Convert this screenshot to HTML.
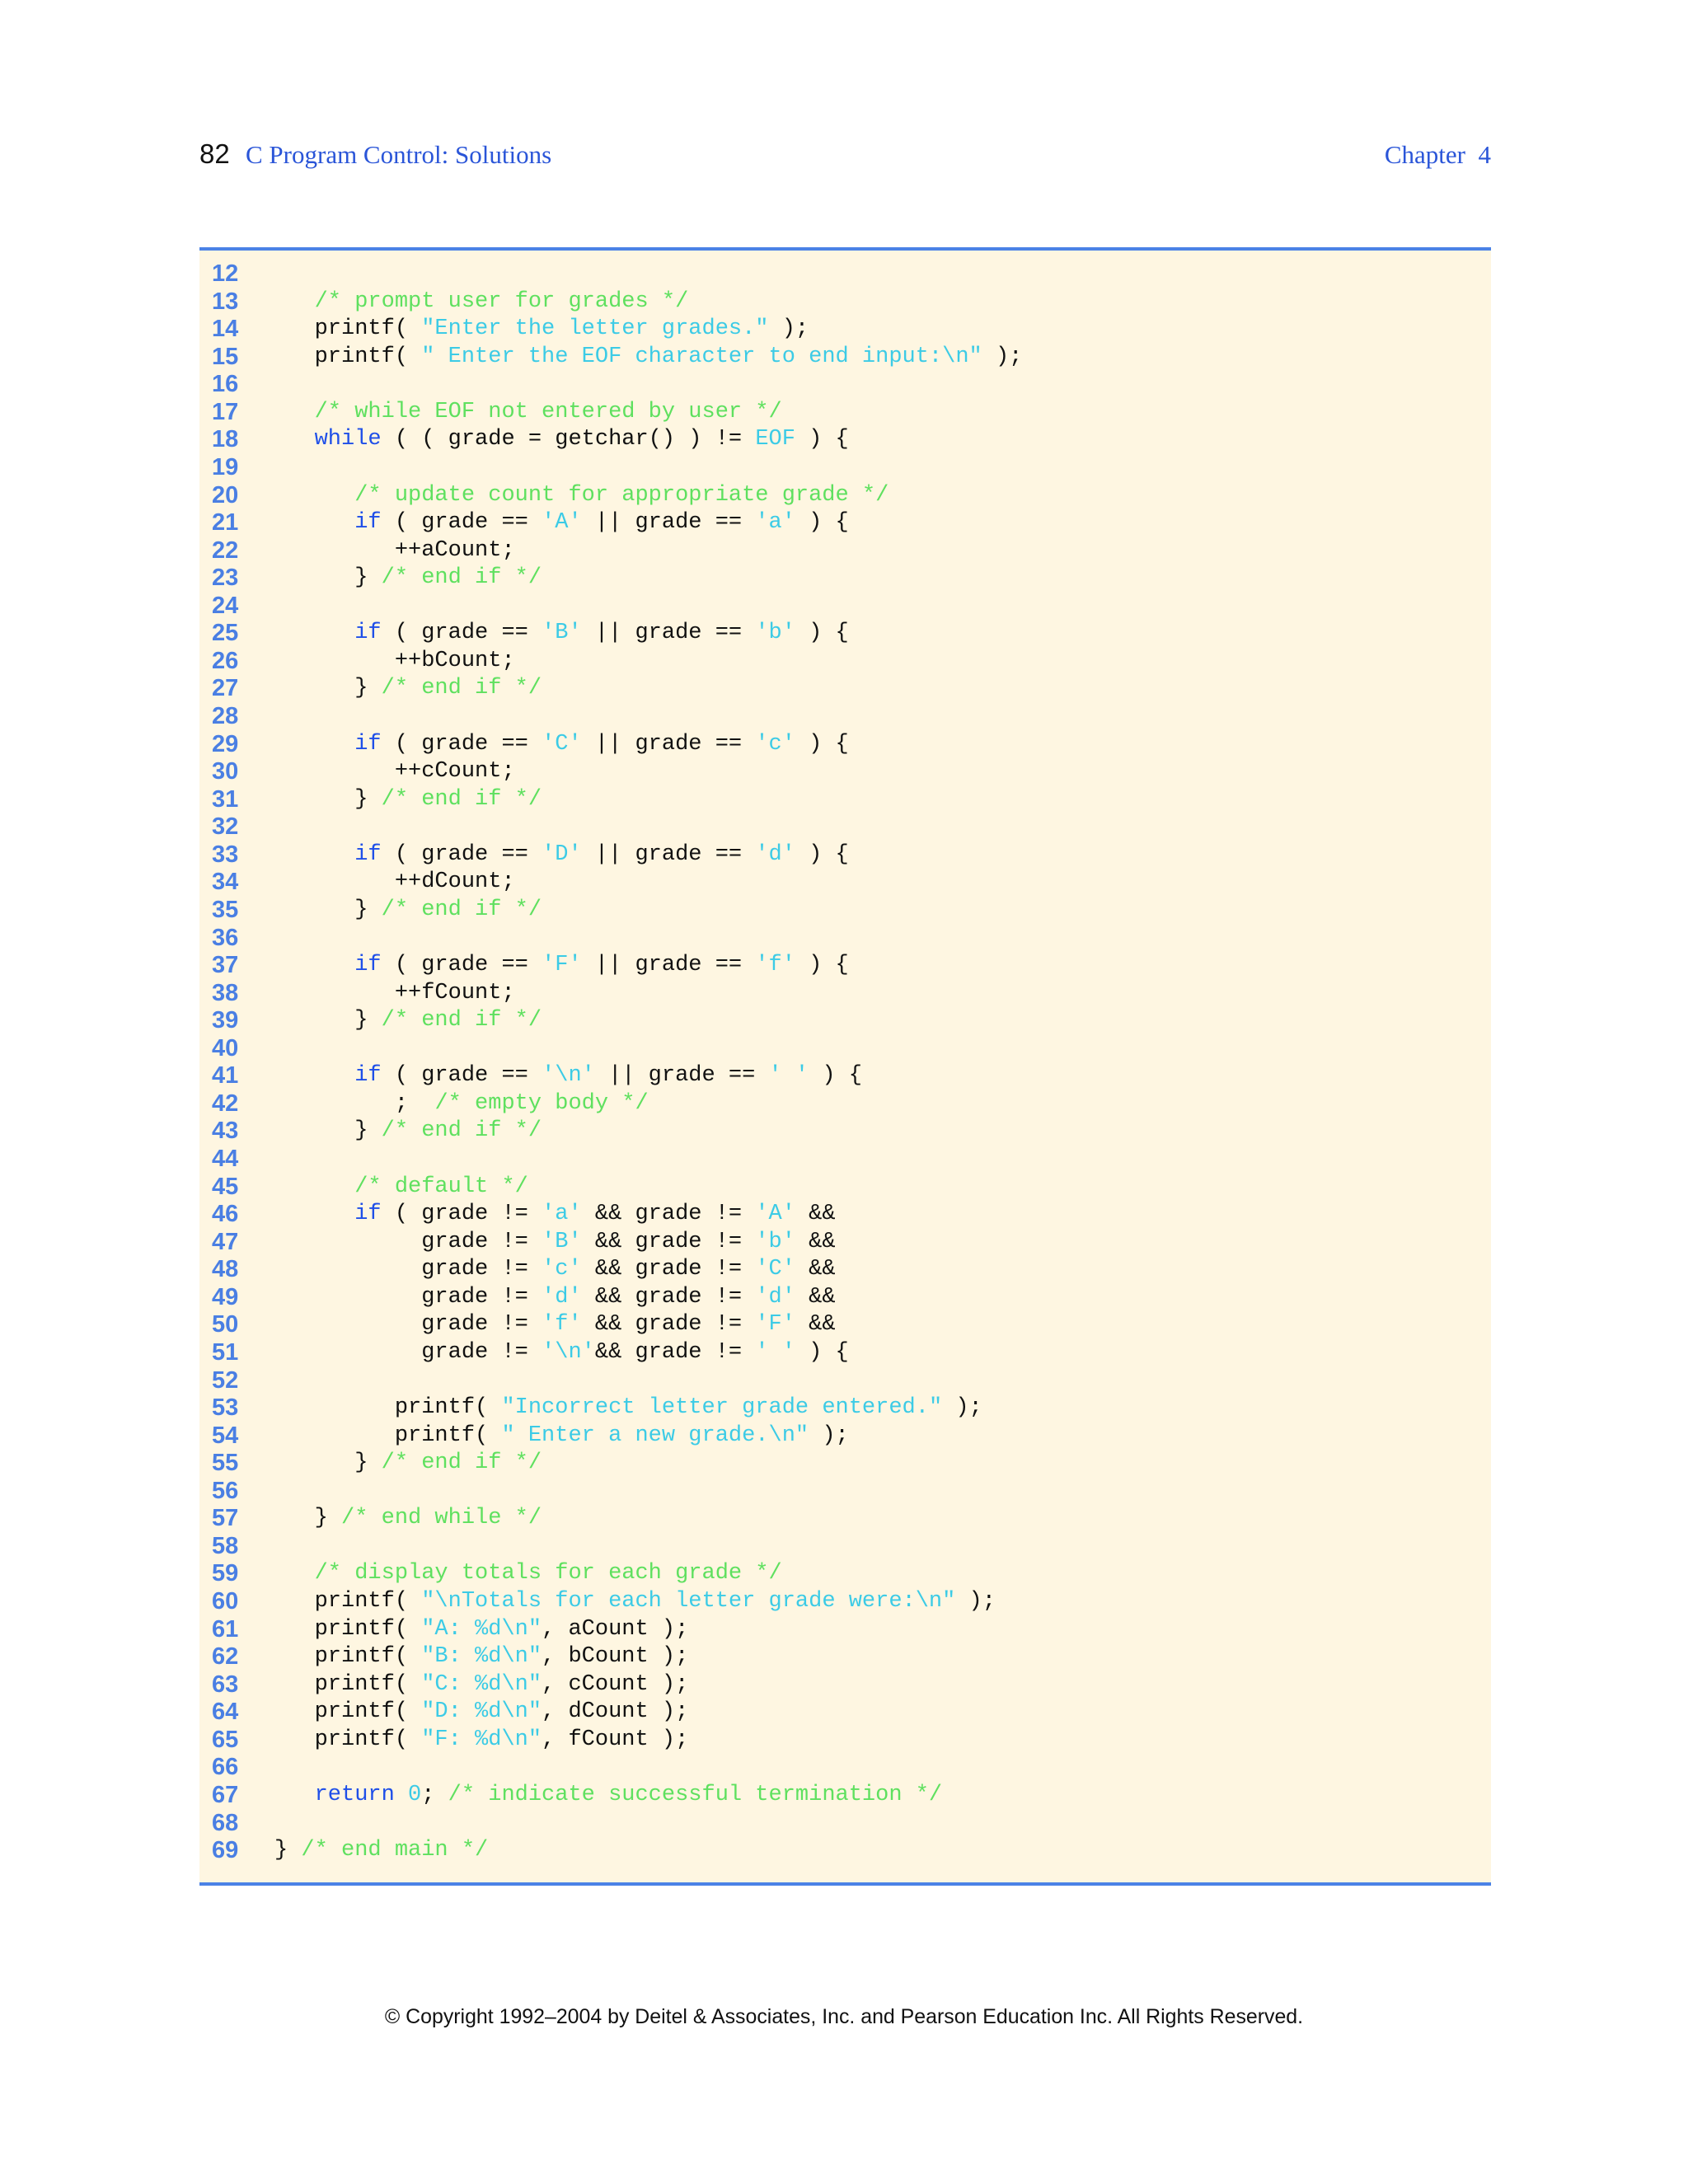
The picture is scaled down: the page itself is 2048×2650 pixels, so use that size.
<!DOCTYPE html>
<html><head><meta charset="utf-8"><style>
body{margin:0;width:2048px;height:2650px;background:#fff;position:relative;overflow:hidden}
.hdr{position:absolute;top:170px;font-size:31px}
.box{position:absolute;left:242px;top:300px;width:1567px;height:1988px;background:#fef6e1;border-top:4px solid #4b82e6;border-bottom:4px solid #4b82e6;box-sizing:border-box}
pre{margin:0;position:absolute;top:316px;font-family:"Liberation Mono",monospace;font-size:27px;line-height:33.56px;color:#111}
.ln{left:257px;font-family:"Liberation Sans",sans-serif;font-weight:bold;color:#4a7fe3;font-size:29px}
.code{left:333px}
.k{color:#1f4fe8}.c{color:#5fe05f}.s{color:#3ccbe6}
.ft{position:absolute;top:2433px;left:0;width:2048px;text-align:center;font-family:"Liberation Sans",sans-serif;font-size:24.9px;color:#111}
</style></head><body>
<div class="hdr" style="left:242px;font-family:'Liberation Sans',sans-serif;color:#111;font-size:33px;top:168px">82</div>
<div class="hdr" style="left:298px;font-family:'Liberation Serif',serif;color:#2a55d8">C Program Control: Solutions</div>
<div class="hdr" style="right:239px;font-family:'Liberation Serif',serif;color:#2a55d8">Chapter&nbsp; 4</div>
<div class="box"></div>
<pre class="ln">12
13
14
15
16
17
18
19
20
21
22
23
24
25
26
27
28
29
30
31
32
33
34
35
36
37
38
39
40
41
42
43
44
45
46
47
48
49
50
51
52
53
54
55
56
57
58
59
60
61
62
63
64
65
66
67
68
69</pre>
<pre class="code">

   <span class="c">/* prompt user for grades */</span>
   printf( <span class="s">"Enter the letter grades."</span> );
   printf( <span class="s">" Enter the EOF character to end input:\n"</span> );

   <span class="c">/* while EOF not entered by user */</span>
   <span class="k">while</span> ( ( grade = getchar() ) != <span class="s">EOF</span> ) {

      <span class="c">/* update count for appropriate grade */</span>
      <span class="k">if</span> ( grade == <span class="s">'A'</span> || grade == <span class="s">'a'</span> ) {
         ++aCount;
      } <span class="c">/* end if */</span>

      <span class="k">if</span> ( grade == <span class="s">'B'</span> || grade == <span class="s">'b'</span> ) {
         ++bCount;
      } <span class="c">/* end if */</span>

      <span class="k">if</span> ( grade == <span class="s">'C'</span> || grade == <span class="s">'c'</span> ) {
         ++cCount;
      } <span class="c">/* end if */</span>

      <span class="k">if</span> ( grade == <span class="s">'D'</span> || grade == <span class="s">'d'</span> ) {
         ++dCount;
      } <span class="c">/* end if */</span>

      <span class="k">if</span> ( grade == <span class="s">'F'</span> || grade == <span class="s">'f'</span> ) {
         ++fCount;
      } <span class="c">/* end if */</span>

      <span class="k">if</span> ( grade == <span class="s">'\n'</span> || grade == <span class="s">' '</span> ) {
         ;  <span class="c">/* empty body */</span>
      } <span class="c">/* end if */</span>

      <span class="c">/* default */</span>
      <span class="k">if</span> ( grade != <span class="s">'a'</span> &amp;&amp; grade != <span class="s">'A'</span> &amp;&amp;
           grade != <span class="s">'B'</span> &amp;&amp; grade != <span class="s">'b'</span> &amp;&amp;
           grade != <span class="s">'c'</span> &amp;&amp; grade != <span class="s">'C'</span> &amp;&amp;
           grade != <span class="s">'d'</span> &amp;&amp; grade != <span class="s">'d'</span> &amp;&amp;
           grade != <span class="s">'f'</span> &amp;&amp; grade != <span class="s">'F'</span> &amp;&amp;
           grade != <span class="s">'\n'</span>&amp;&amp; grade != <span class="s">' '</span> ) {

         printf( <span class="s">"Incorrect letter grade entered."</span> );
         printf( <span class="s">" Enter a new grade.\n"</span> );
      } <span class="c">/* end if */</span>

   } <span class="c">/* end while */</span>

   <span class="c">/* display totals for each grade */</span>
   printf( <span class="s">"\nTotals for each letter grade were:\n"</span> );
   printf( <span class="s">"A: %d\n"</span>, aCount );
   printf( <span class="s">"B: %d\n"</span>, bCount );
   printf( <span class="s">"C: %d\n"</span>, cCount );
   printf( <span class="s">"D: %d\n"</span>, dCount );
   printf( <span class="s">"F: %d\n"</span>, fCount );

   <span class="k">return</span> <span class="s">0</span>; <span class="c">/* indicate successful termination */</span>

} <span class="c">/* end main */</span></pre>
<div class="ft">© Copyright 1992–2004 by Deitel &amp; Associates, Inc. and Pearson Education Inc. All Rights Reserved.</div>
</body></html>
